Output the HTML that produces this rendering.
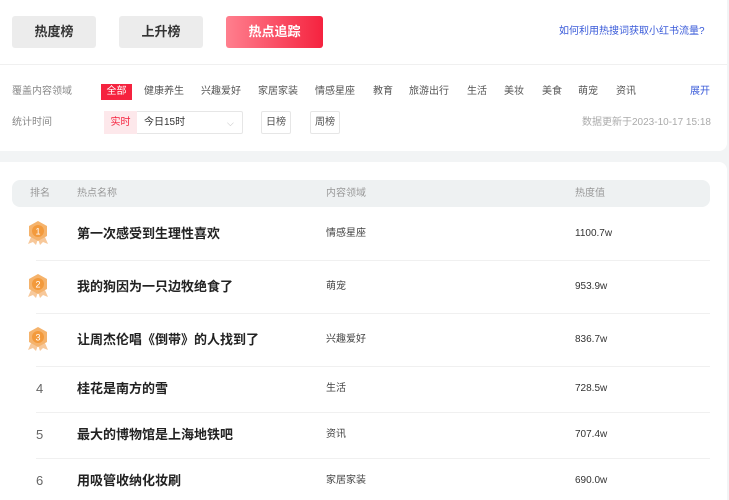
<!DOCTYPE html>
<html><head><meta charset="utf-8"><style>
*{margin:0;padding:0;box-sizing:border-box}
body{width:729px;height:500px;overflow:hidden;background:#f2f4f5;font-family:"Liberation Sans","Noto Sans CJK SC",sans-serif;position:relative}
.a{position:absolute;white-space:nowrap;line-height:14px}
.card1{position:absolute;left:0;top:0;width:727px;height:151px;background:#fff;border-radius:0 0 8px 0}
.card2{position:absolute;left:0;top:162px;width:727px;height:338px;background:#fff;border-radius:0 8px 0 0}
.btn{position:absolute;top:16px;height:32px;border-radius:3px;background:#ececec;color:#333;font-size:13px;font-weight:bold;text-align:center;line-height:32px}
.f{position:absolute;top:85px;font-size:10px;color:#555;line-height:14px}
.g{color:#888}
.row{position:absolute;left:36px;width:674px;border-top:1px solid #f0f0f0}
.t{font-size:13px;font-weight:bold;color:#222;line-height:16px}
.s{font-size:10px;color:#444}
.n{font-size:10px;color:#333}
.badge{position:absolute;left:27px;width:22px;height:26px}
</style></head><body>
<div class="card1"></div>
<div class="btn" style="left:12px;width:84px">热度榜</div>
<div class="btn" style="left:119px;width:84px">上升榜</div>
<div class="btn" style="left:226px;width:97px;color:#fff;background:linear-gradient(90deg,#ff7f8e,#f5233f)">热点追踪</div>
<div class="a" style="left:559px;top:25px;font-size:10px;color:#3a5bd9">如何利用热搜词获取小红书流量?</div>
<div style="position:absolute;left:0;top:64px;width:727px;height:1px;background:#f0f0f0"></div>
<div class="f g" style="left:12px">覆盖内容领域</div>
<div class="a" style="left:101px;top:84px;width:31px;height:16px;background:#f5233f;color:#fff;font-size:10px;line-height:16px;text-align:center">全部</div>
<div class="f" style="left:144px">健康养生</div>
<div class="f" style="left:201px">兴趣爱好</div>
<div class="f" style="left:258px">家居家装</div>
<div class="f" style="left:315px">情感星座</div>
<div class="f" style="left:373px">教育</div>
<div class="f" style="left:409px">旅游出行</div>
<div class="f" style="left:467px">生活</div>
<div class="f" style="left:504px">美妆</div>
<div class="f" style="left:542px">美食</div>
<div class="f" style="left:578px">萌宠</div>
<div class="f" style="left:616px">资讯</div>
<div class="f" style="left:690px;color:#3a5bd9">展开</div>
<div class="f g" style="left:12px;top:116px">统计时间</div>
<div class="a" style="left:104px;top:111px;width:139px;height:23px;border:1px solid #e6e6e6;border-radius:2px;background:#fff"></div>
<div class="a" style="left:104px;top:111px;width:33px;height:23px;background:#fde8eb;color:#f5233f;font-size:10px;line-height:23px;text-align:center">实时</div>
<div class="a" style="left:144px;top:116px;font-size:10px;color:#333">今日15时</div>
<div class="a" style="left:227px;top:116px;font-size:9px;color:#bbb">⌵</div>
<div class="a" style="left:261px;top:111px;width:30px;height:23px;border:1px solid #e6e6e6;border-radius:2px;font-size:10px;color:#555;line-height:21px;text-align:center">日榜</div>
<div class="a" style="left:310px;top:111px;width:30px;height:23px;border:1px solid #e6e6e6;border-radius:2px;font-size:10px;color:#555;line-height:21px;text-align:center">周榜</div>
<div class="a" style="left:582px;top:116px;font-size:10px;color:#aaa">数据更新于2023-10-17 15:18</div>
<div class="card2"></div>
<div class="a" style="left:12px;top:180px;width:698px;height:27px;background:#eef1f2;border-radius:8px"></div>
<div class="a" style="left:30px;top:187px;font-size:10px;color:#999">排名</div>
<div class="a" style="left:77px;top:187px;font-size:10px;color:#999">热点名称</div>
<div class="a" style="left:326px;top:187px;font-size:10px;color:#999">内容领域</div>
<div class="a" style="left:575px;top:187px;font-size:10px;color:#999">热度值</div>

<svg class="badge" style="top:220px" viewBox="0 0 22 26"><path d="M4 17 L1 24 L6 22 L9 25 L11 19Z M18 17 L21 24 L16 22 L13 25 L11 19Z" fill="#f7c89a"/><path d="M11 1 L20 6 L20 16 L11 21 L2 16 L2 6Z" fill="#f5b36c"/><circle cx="11" cy="11" r="6" fill="#f39a3c"/><text x="11" y="14.5" font-size="9" fill="#fff" text-anchor="middle" font-family="Liberation Sans">1</text></svg>
<div class="a t" style="left:77px;top:226px">第一次感受到生理性喜欢</div>
<div class="a s" style="left:326px;top:227px">情感星座</div>
<div class="a n" style="left:575px;top:227px">1100.7w</div>
<div class="row" style="top:260px"></div>
<svg class="badge" style="top:273px" viewBox="0 0 22 26"><path d="M4 17 L1 24 L6 22 L9 25 L11 19Z M18 17 L21 24 L16 22 L13 25 L11 19Z" fill="#f7c89a"/><path d="M11 1 L20 6 L20 16 L11 21 L2 16 L2 6Z" fill="#f5b36c"/><circle cx="11" cy="11" r="6" fill="#f39a3c"/><text x="11" y="14.5" font-size="9" fill="#fff" text-anchor="middle" font-family="Liberation Sans">2</text></svg>
<div class="a t" style="left:77px;top:279px">我的狗因为一只边牧绝食了</div>
<div class="a s" style="left:326px;top:280px">萌宠</div>
<div class="a n" style="left:575px;top:280px">953.9w</div>
<div class="row" style="top:313px"></div>
<svg class="badge" style="top:326px" viewBox="0 0 22 26"><path d="M4 17 L1 24 L6 22 L9 25 L11 19Z M18 17 L21 24 L16 22 L13 25 L11 19Z" fill="#f7c89a"/><path d="M11 1 L20 6 L20 16 L11 21 L2 16 L2 6Z" fill="#f5b36c"/><circle cx="11" cy="11" r="6" fill="#f39a3c"/><text x="11" y="14.5" font-size="9" fill="#fff" text-anchor="middle" font-family="Liberation Sans">3</text></svg>
<div class="a t" style="left:77px;top:332px">让周杰伦唱《倒带》的人找到了</div>
<div class="a s" style="left:326px;top:333px">兴趣爱好</div>
<div class="a n" style="left:575px;top:333px">836.7w</div>
<div class="row" style="top:366px"></div>
<div class="a" style="left:36px;top:382px;font-size:13px;color:#666">4</div>
<div class="a t" style="left:77px;top:381px">桂花是南方的雪</div>
<div class="a s" style="left:326px;top:382px">生活</div>
<div class="a n" style="left:575px;top:382px">728.5w</div>
<div class="row" style="top:412px"></div>
<div class="a" style="left:36px;top:428px;font-size:13px;color:#666">5</div>
<div class="a t" style="left:77px;top:427px">最大的博物馆是上海地铁吧</div>
<div class="a s" style="left:326px;top:428px">资讯</div>
<div class="a n" style="left:575px;top:428px">707.4w</div>
<div class="row" style="top:458px"></div>
<div class="a" style="left:36px;top:474px;font-size:13px;color:#666">6</div>
<div class="a t" style="left:77px;top:473px">用吸管收纳化妆刷</div>
<div class="a s" style="left:326px;top:474px">家居家装</div>
<div class="a n" style="left:575px;top:474px">690.0w</div>
</body></html>
